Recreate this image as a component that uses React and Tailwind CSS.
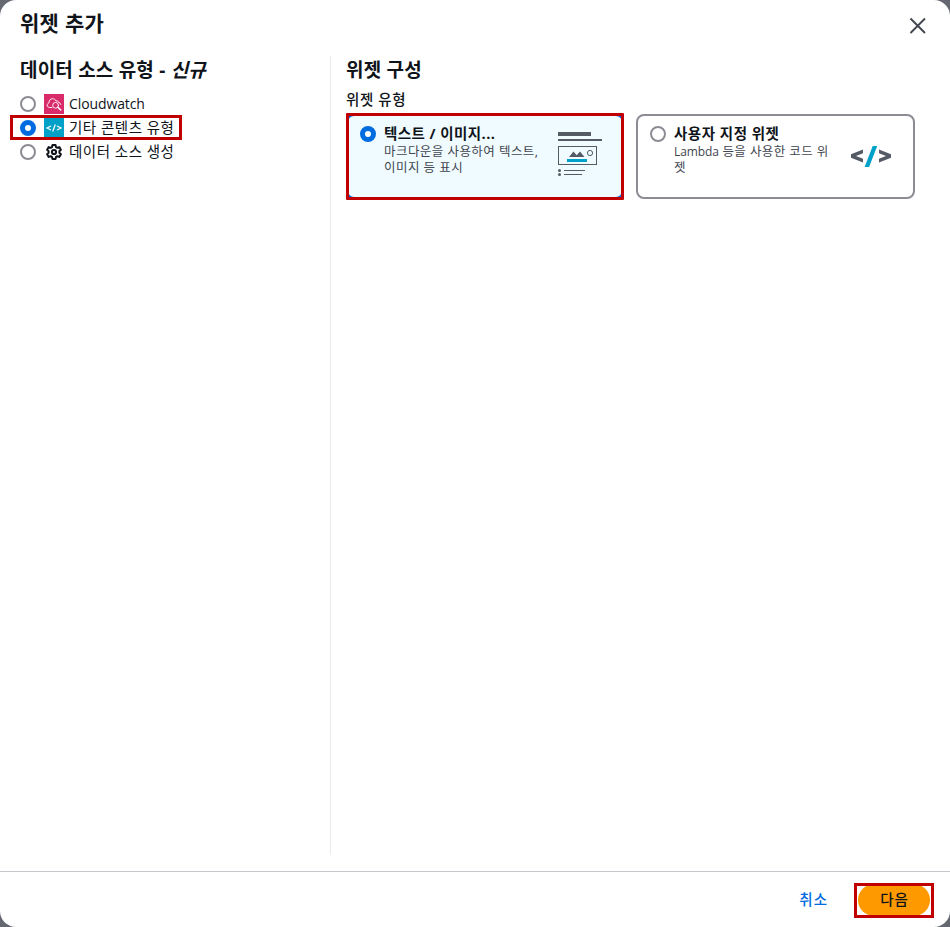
import React from 'react';

function Radio({ checked }) {
  return checked ? (
    <span className="block size-4 shrink-0 rounded-full border-5 border-[#006ce0] bg-white" />
  ) : (
    <span className="block size-4 shrink-0 rounded-full border-2 border-[#8c8c94] bg-white" />
  );
}

function CloudwatchIcon() {
  return (
    <svg width="20" height="20" viewBox="0 0 20 20" fill="none" stroke="#fff" strokeWidth="0.9" strokeLinecap="round" strokeLinejoin="round">
      <rect width="20" height="20" fill="#d92b69" stroke="none" />
      <path d="M8 13.500H5.700C4.200 13.500 3.200 12.500 3.200 11.200C3.200 10 4 9.200 5 8.900C4.900 6.500 6.300 4.700 8.600 4.700C10.300 4.700 11.500 5.600 12 7.100C13.400 6.500 14.500 7.300 14.600 8.400C15.700 8.600 16.600 9.300 16.800 10.400" />
      <circle cx="11.600" cy="11.300" r="2.900" />
      <path d="M13.800 13.300L16.700 15.900" strokeWidth="1.500" />
    </svg>
  );
}

function ContentIcon() {
  return (
    <svg width="20" height="20" viewBox="0 0 20 20" fill="none" stroke="#fff" strokeWidth="1.200">
      <rect width="20" height="20" fill="#00a1c9" stroke="none" />
      <path d="M7 8L3 10L7 12M13 8L17 10L13 12M11.300 6.500L8.700 13.500" />
    </svg>
  );
}

function GearIcon() {
  return (
    <svg width="20" height="20" viewBox="0 0 20 20" fill="none" stroke="#0f141a" strokeWidth="2" strokeLinejoin="round">
      <path d="M8.500 3H11.500L12 5.100L13.300 5.800L15.300 5.100L16.900 7.800L15.400 9.300V10.700L16.900 12.200L15.300 14.900L13.300 14.200L12 14.900L11.500 17H8.500L8 14.900L6.700 14.200L4.700 14.900L3.100 12.200L4.600 10.700V9.300L3.100 7.800L4.700 5.100L6.700 5.800L8 5.100Z" />
      <circle cx="10" cy="10" r="2.100" />
    </svg>
  );
}

function TextWidgetArt() {
  return (
    <svg width="46" height="48" viewBox="0 0 46 48" fill="#545b64">
      <rect x="1" y="2" width="33" height="4" />
      <rect x="1" y="9" width="44" height="2" />
      <rect x="1.500" y="16.500" width="38" height="18" fill="none" stroke="#545b64" />
      <path d="M12 27L16.500 21.500L19.700 25.300L23 21.500L27.500 27Z" />
      <rect x="10" y="29" width="20" height="3" fill="#00a1c9" />
      <circle cx="33" cy="23" r="2.600" fill="none" stroke="#545b64" />
      <circle cx="2.500" cy="40.500" r="1.500" />
      <circle cx="2.500" cy="44.500" r="1.500" />
      <rect x="7" y="40" width="21" height="1" />
      <rect x="7" y="44" width="18" height="1" />
    </svg>
  );
}

function CodeArt() {
  return (
    <svg width="42" height="24" viewBox="0 0 42 24">
      <path d="M13 4.500V8.300L6 11L13 13.700V17.500L1 12.700V9.300Z" fill="#545b64" />
      <path d="M29 4.500V8.300L36 11L29 13.700V17.500L41 12.700V9.300Z" fill="#545b64" />
      <path d="M22.700 1H27.200L19.100 22H14.600Z" fill="#00a1c9" />
    </svg>
  );
}

function Source({ checked, icon, children }) {
  return (
    <label className="flex h-6 items-center">
      <Radio checked={checked} />
      <span className="ml-2 block size-5">{icon}</span>
      <span className="ml-[5px] whitespace-nowrap text-sm leading-5">{children}</span>
    </label>
  );
}

export default function App() {
  return (
    <div className="h-[927px] w-[950px] overflow-hidden bg-[#656871]">
      <main className="flex h-full flex-col rounded-[16px] bg-white font-['Open_Sans','Noto_Sans_CJK_KR',sans-serif] text-[#0f141a]">
        <header className="flex h-[56px] shrink-0 items-start justify-between pl-5 pr-6">
          <h1 className="mt-[11px] text-[21px] font-bold leading-6 tracking-[0.3px]">위젯 추가</h1>
          <svg className="mt-[17px]" width="17" height="17" viewBox="0 0 17 17" stroke="#424650" strokeWidth="1.900">
            <path d="M1.500 1.500L16 16M16 1.500L1.500 16" />
          </svg>
        </header>
        <div className="flex h-[799px] shrink-0">
          <section className="w-[331px] shrink-0 border-r border-[#ebebf0] pl-5">
            <h2 className="mt-0.5 text-[19px] font-bold leading-6 tracking-[0.2px]">
              데이터 소스 유형 - <em>신규</em>
            </h2>
            <div className="mt-2.5">
              <Source icon={<CloudwatchIcon />}><span className="tracking-[-0.1px]">Cloudwatch</span></Source>
              <div className="relative">
                <Source checked icon={<ContentIcon />}><span className="text-[14.5px] tracking-[0.5px]">기타 콘텐츠 유형</span></Source>
                <div className="absolute -left-[10px] -top-[1px] h-[25px] w-[172px] border-3 border-[#c00000]" />
              </div>
              <Source icon={<GearIcon />}><span className="text-[14.5px] tracking-[0.5px]">데이터 소스 생성</span></Source>
            </div>
          </section>
          <section className="pl-[15px]">
            <h2 className="mt-0.5 text-[19px] font-bold leading-6 tracking-[0.2px]">위젯 구성</h2>
            <h3 className="mt-2 text-[14.5px] font-medium leading-5 tracking-[0.6px]">위젯 유형</h3>
            <div className="mt-1 flex gap-3">
              <div className="relative flex h-[85px] w-[278px] rounded-lg border-2 border-[#006ce0] bg-[#f0fbff] pl-3 pt-2.5">
                <Radio checked />
                <div className="ml-2 w-[160px] whitespace-nowrap">
                  <div className="-mt-0.5 text-[14.5px] font-bold leading-5 tracking-[0.45px]">텍스트 / 이미지...</div>
                  <div className="text-[12.5px] leading-4 tracking-[0.45px] text-[#424650]">마크다운을 사용하여 텍스트,<br />이미지 등 표시</div>
                </div>
                <div className="ml-[13px] mt-1"><TextWidgetArt /></div>
                <div className="absolute -left-[2px] -top-[3px] h-[87px] w-[278px] rounded-[1px] border-3 border-[#c00000]" />
              </div>
              <div className="flex h-[85px] w-[279px] rounded-lg border-2 border-[#8c8c94] bg-white pl-3 pt-2.5">
                <Radio />
                <div className="ml-2 w-[160px] whitespace-nowrap">
                  <div className="-mt-0.5 text-[14.5px] font-bold leading-5 tracking-[0.5px]">사용자 지정 위젯</div>
                  <div className="text-[12.5px] leading-4 tracking-[0.4px] text-[#424650]"><span className="text-xs tracking-[-0.1px]">Lambda</span> 등을 사용한 코드 위<br />젯</div>
                </div>
                <div className="ml-4 mt-[19px]"><CodeArt /></div>
              </div>
            </div>
          </section>
        </div>
        <footer className="mt-4 flex h-[56px] shrink-0 items-center justify-end border-t border-[#c6c6cd] pr-5">
          <button className="mr-[30px] text-[14.5px] font-medium leading-5 tracking-[1px] text-[#006ce0]">취소</button>
          <button className="relative h-8 w-[72px] rounded-full bg-[#ff9900] pl-px text-[14.5px] font-medium leading-5 tracking-[0.8px]">
            다음
            <span className="absolute -left-1 -top-px h-[35px] w-[80px] border-3 border-[#c00000]" />
          </button>
        </footer>
      </main>
    </div>
  );
}
